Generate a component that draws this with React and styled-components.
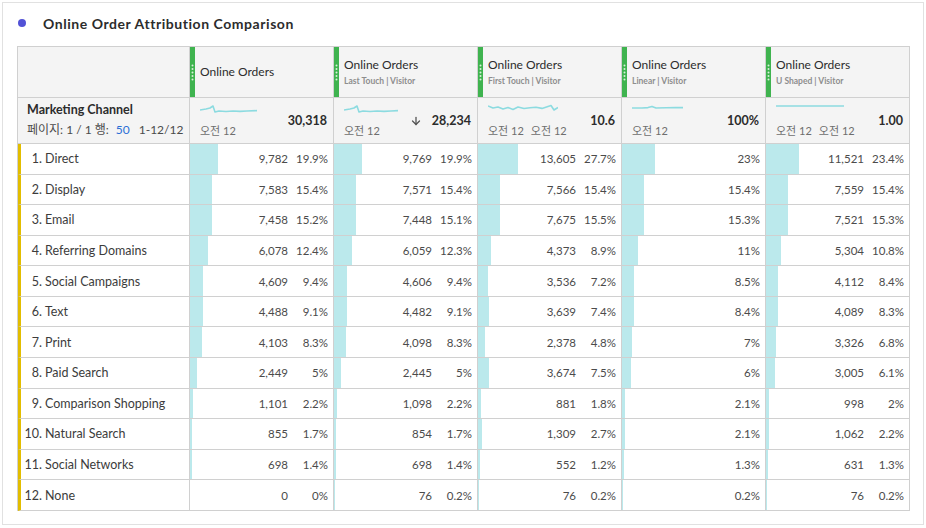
import React from "react";
import styled, { createGlobalStyle } from "styled-components";
import { ArrowDown } from "lucide-react";

const GlobalStyle = createGlobalStyle`
  html, body {
    margin: 0;
    padding: 0;
    background: #ffffff;
    font-family: Lato, "Noto Sans", "Noto Sans CJK KR", sans-serif;
    color: #4b4b4b;
  }
  * { box-sizing: border-box; }
`;

const columns = [
  {
    sub: null,
    total: "30,318",
    labels: ["오전 12"],
    width: 57,
    spark: "0,6 6,5 10,4 13,2 15,8 19,7 26,7.5 33,7 40,7.4 47,7 57,6.6",
  },
  {
    sub: "Last Touch | Visitor",
    total: "28,234",
    arrow: true,
    labels: ["오전 12"],
    width: 54,
    spark: "0,6 6,5 10,4 13,2 15,8 19,7 26,7.5 33,7 40,7.4 47,7 54,6.6",
  },
  {
    sub: "First Touch | Visitor",
    total: "10.6",
    labels: ["오전 12", "오전 12"],
    width: 70,
    spark:
      "0,2 5,4 10,3 15,5 20,3.5 25,5.5 30,3 36,4.5 42,3.8 48,3.2 54,4.4 60,2.5 63,1.5 66,6 70,3.5",
  },
  {
    sub: "Linear | Visitor",
    total: "100%",
    labels: ["오전 12"],
    width: 51,
    spark: "0,4 10,4 16,3.6 20,2.4 24,4 34,3.8 44,3.6 51,3.6",
  },
  {
    sub: "U Shaped | Visitor",
    total: "1.00",
    labels: ["오전 12", "오전 12"],
    width: 68,
    spark: "0,2 68,2",
  },
];

// [value, percent] per attribution column; Linear shows only a percent
const rows = [
  ["Direct", ["9,782", 19.9], ["9,769", 19.9], ["13,605", 27.7], [null, 23], ["11,521", 23.4]],
  ["Display", ["7,583", 15.4], ["7,571", 15.4], ["7,566", 15.4], [null, 15.4], ["7,559", 15.4]],
  ["Email", ["7,458", 15.2], ["7,448", 15.1], ["7,675", 15.5], [null, 15.3], ["7,521", 15.3]],
  ["Referring Domains", ["6,078", 12.4], ["6,059", 12.3], ["4,373", 8.9], [null, 11], ["5,304", 10.8]],
  ["Social Campaigns", ["4,609", 9.4], ["4,606", 9.4], ["3,536", 7.2], [null, 8.5], ["4,112", 8.4]],
  ["Text", ["4,488", 9.1], ["4,482", 9.1], ["3,639", 7.4], [null, 8.4], ["4,089", 8.3]],
  ["Print", ["4,103", 8.3], ["4,098", 8.3], ["2,378", 4.8], [null, 7], ["3,326", 6.8]],
  ["Paid Search", ["2,449", 5], ["2,445", 5], ["3,674", 7.5], [null, 6], ["3,005", 6.1]],
  ["Comparison Shopping", ["1,101", 2.2], ["1,098", 2.2], ["881", 1.8], [null, 2.1], ["998", 2]],
  ["Natural Search", ["855", 1.7], ["854", 1.7], ["1,309", 2.7], [null, 2.1], ["1,062", 2.2]],
  ["Social Networks", ["698", 1.4], ["698", 1.4], ["552", 1.2], [null, 1.3], ["631", 1.3]],
  ["None", ["0", 0], ["76", 0.2], ["76", 0.2], [null, 0.2], ["76", 0.2]],
];

const Card = styled.div`
  margin: 2px;
  width: 922px;
  height: 523px;
  border: 1px solid #e1e1e1;
  padding: 0 14px;
`;

const TitleBar = styled.div`
  height: 40px;
  display: flex;
  align-items: center;
  gap: 17px;
  padding-left: 1px;
  margin-bottom: 3px;
`;

const Dot = styled.span`
  width: 8px;
  height: 8px;
  border-radius: 50%;
  background: #5252d6;
`;

const Title = styled.h2`
  margin: 0;
  font-size: 14px;
  font-weight: 700;
  color: #2c2c2c;
  letter-spacing: 0.55px;
`;

const Table = styled.div`
  width: 893px;
  border-top: 1px solid #d0d0d0;
  border-left: 1px solid #d0d0d0;
  display: flex;
  flex-direction: column;
`;

const Row = styled.div`
  display: grid;
  grid-template-columns: 172px repeat(5, 144px);
  height: ${(p) => p.$h};
`;

const Cell = styled.div`
  position: relative;
  border-right: 1px solid #d0d0d0;
  border-bottom: 1px solid #d0d0d0;
  background: ${(p) => (p.$head ? "#f4f4f4" : "#ffffff")};
  min-width: 0;
`;

const MetricHead = styled(Cell)`
  display: flex;
  align-items: stretch;
`;

const Handle = styled.div`
  width: 5px;
  flex: none;
  background: #3fb34f;
  display: flex;
  align-items: center;
  justify-content: center;
`;

const HeadText = styled.div`
  display: flex;
  flex-direction: column;
  justify-content: center;
  padding-left: 5px;
`;

const HeadTitle = styled.div`
  font-size: 12px;
  color: #2c2c2c;
  line-height: 16px;
`;

const HeadSub = styled.div`
  font-size: 8.5px;
  font-weight: 700;
  color: #8e8e8e;
  line-height: 12px;
  margin-top: 2px;
`;

const DimHead = styled(Cell)`
  padding: 4px 0 0 9px;
`;

const DimTitle = styled.div`
  font-size: 12.5px;
  font-weight: 700;
  color: #2c2c2c;
  line-height: 16px;
`;

const Paging = styled.div`
  margin-top: 4px;
  font-size: 12px;
  color: #4b4b4b;
  line-height: 16px;
  display: flex;
  gap: 4px;
`;

const PageLink = styled.span`
  color: #2b6fd6;
  margin-left: 3px;
  margin-right: 5px;
`;

const TotalCell = styled(Cell)`
  display: flex;
  justify-content: space-between;
  align-items: center;
  padding: 0 6px 0 10px;
`;

const SparkBox = styled.div`
  align-self: stretch;
  display: flex;
  flex-direction: column;
  padding-top: 5px;
`;

const SparkLabels = styled.div`
  margin-top: 9px;
  display: flex;
  gap: 7px;
  font-size: 11px;
  line-height: 14px;
  color: #6e6e6e;
`;

const Total = styled.div`
  display: flex;
  align-items: center;
  gap: 10px;
  font-size: 12.5px;
  font-weight: 700;
  color: #2c2c2c;
`;

const DimCell = styled(Cell)`
  border-left: 3px solid #e2bd00;
  display: flex;
  align-items: center;
  gap: 3px;
  font-size: 12.5px;
  color: #3c3c3c;
`;

const Ordinal = styled.span`
  width: 21px;
  text-align: right;
`;

const ValueCell = styled(Cell)`
  display: flex;
  align-items: center;
  justify-content: flex-end;
  padding-right: 5px;
  font-size: 11.5px;
  color: #4b4b4b;
`;

const Bar = styled.div`
  position: absolute;
  left: 0;
  top: 0;
  bottom: 0;
  background: #bbe9ec;
`;

const Value = styled.span`
  position: relative;
`;

const Pct = styled.span`
  position: relative;
  width: 40px;
  text-align: right;
`;

const Grip = () => (
  <svg width="3" height="17" viewBox="0 0 3 17">
    {[1.5, 5, 8.5, 12, 15.5].map((y) => (
      <circle key={y} cx="1.5" cy={y} r="1" fill="#d8f0da" />
    ))}
  </svg>
);

const Sparkline = ({ points, width }) => (
  <svg width={width} height="12" viewBox={`0 -1 ${width} 12`}>
    <polyline points={points} fill="none" stroke="#8cdbe0" strokeWidth="1.6" strokeLinejoin="round" />
  </svg>
);

const fmtPct = (p) => `${p}%`;

export default function App() {
  return (
    <>
      <GlobalStyle />
      <Card>
        <TitleBar>
          <Dot />
          <Title>Online Order Attribution Comparison</Title>
        </TitleBar>
        <Table>
          <Row $h="51px">
            <Cell $head />
            {columns.map((c, i) => (
              <MetricHead $head key={i}>
                <Handle>
                  <Grip />
                </Handle>
                <HeadText>
                  <HeadTitle>Online Orders</HeadTitle>
                  {c.sub && <HeadSub>{c.sub}</HeadSub>}
                </HeadText>
              </MetricHead>
            ))}
          </Row>
          <Row $h="46px">
            <DimHead $head>
              <DimTitle>Marketing Channel</DimTitle>
              <Paging>
                <span>페이지: 1 / 1 행:</span>
                <PageLink>50</PageLink>
                <span>1-12/12</span>
              </Paging>
            </DimHead>
            {columns.map((c, i) => (
              <TotalCell $head key={i}>
                <SparkBox>
                  <Sparkline points={c.spark} width={c.width} />
                  <SparkLabels>
                    {c.labels.map((l, j) => (
                      <span key={j}>{l}</span>
                    ))}
                  </SparkLabels>
                </SparkBox>
                <Total>
                  {c.arrow && <ArrowDown size={12} strokeWidth={2.6} color="#555" />}
                  <span>{c.total}</span>
                </Total>
              </TotalCell>
            ))}
          </Row>
          {rows.map(([name, ...vals], r) => (
            <Row $h="30.58px" key={name}>
              <DimCell>
                <Ordinal>{r + 1}.</Ordinal>
                <span>{name}</span>
              </DimCell>
              {vals.map(([v, p], i) => (
                <ValueCell key={i}>
                  <Bar style={{ width: `${(p / 100) * 143}px` }} />
                  {v !== null && <Value>{v}</Value>}
                  <Pct>{fmtPct(p)}</Pct>
                </ValueCell>
              ))}
            </Row>
          ))}
        </Table>
      </Card>
    </>
  );
}
